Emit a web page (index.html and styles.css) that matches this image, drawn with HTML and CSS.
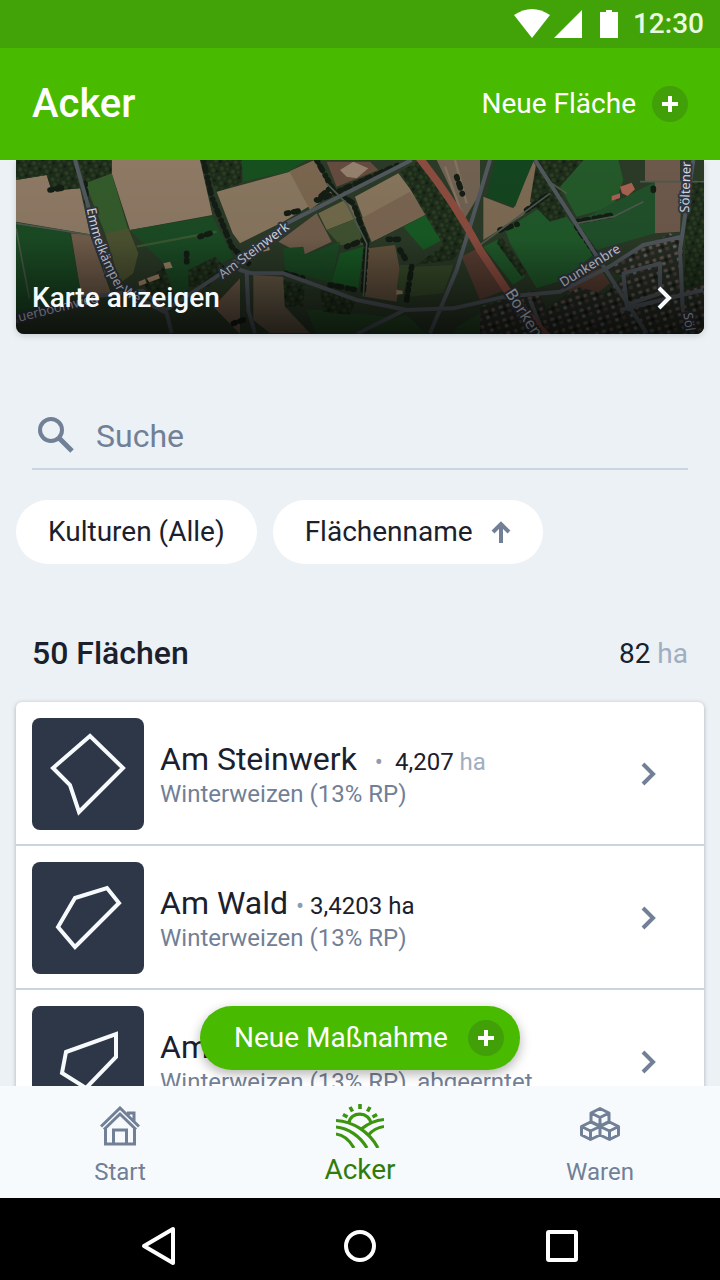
FILE: index.html
```html
<!DOCTYPE html>
<html lang="de">
<head>
<meta charset="utf-8">
<meta name="viewport" content="width=device-width, initial-scale=1">
<title>Acker</title>
<link rel="stylesheet" href="styles.css">
</head>
<body>
<svg class="defs" width="0" height="0" aria-hidden="true">
  <symbol id="chevron" viewBox="0 0 16 24"><path d="M3 2l10 10L3 22" fill="none" stroke="currentColor" stroke-width="4"/></symbol>
  <symbol id="plus" viewBox="0 0 36 36"><circle cx="18" cy="18" r="18" fill="#41a008"/><path d="M18 10v16M10 18h16" stroke="#fff" stroke-width="4"/></symbol>
</svg>
<div class="app">
  <div class="status">
    <svg width="106" height="32" viewBox="0 0 106 32" fill="#fff" aria-hidden="true">
      <path d="M1 7Q19-5 37 7L19 30z"/><path d="M69 2v28H41z"/><path d="M87 4h6V2h6v2h6v26H87z"/>
    </svg>
    <span>12:30</span>
  </div>
  <header class="header">
    <h1>Acker</h1>
    <button class="new-field" type="button">Neue Fläche <svg width="36" height="36" aria-hidden="true"><use href="#plus"/></svg></button>
  </header>
  <main class="content">
    <a class="map" href="#karte">
      <svg class="map-image" viewBox="48 30 2064 522" preserveAspectRatio="xMidYMid slice" aria-hidden="true">
        <defs>
          <linearGradient id="shade" x1="0" y1="0" x2="0" y2="1"><stop offset="0" stop-opacity="0"/><stop offset=".45" stop-opacity=".04"/><stop offset="1" stop-opacity=".68"/></linearGradient>
          <pattern id="wood" width="34" height="30" patternUnits="userSpaceOnUse" patternTransform="rotate(17)"><rect width="34" height="30" fill="#1d2c1a"/><circle cx="7" cy="8" r="6" fill="#2c3e22"/><circle cx="23" cy="5" r="4" fill="#26391f"/><circle cx="17" cy="21" r="6" fill="#293b21"/><circle cx="30" cy="20" r="4" fill="#111b12"/></pattern>
          <pattern id="houses" width="46" height="40" patternUnits="userSpaceOnUse" patternTransform="rotate(-17)"><rect width="46" height="40" fill="#272e25"/><path d="M4 5h12v9H4zM28 6h10v10H28z" fill="#66564e"/><path d="M6 24h10v9H6z" fill="#6d6b65"/><path d="M28 23h11v10H28z" fill="#4e3f39"/><circle cx="21" cy="19" r="6" fill="#151d15"/></pattern>
        </defs>
        <rect x="48" y="30" width="2064" height="522" fill="#2b3a27"/>
        <g fill="#8d7964">
          <path d="M48 90l92-15 15 47 85-7 30 138-222-38zM335 30h265l37 165-247 45-55-170z"/>
          <path d="M650 125l220-60 75-35 50 100-45 25-100 60-130 65-22-30z" fill="#88765f"/>
          <path d="M868 64l77-34 50 100-65 50z" fill="#7a664f"/>
          <path d="M1065 140l130-70 90 120-170 85-22-60z" fill="#86745c"/>
          <path d="M1085 205l145-80 55 65-170 85z" fill="#796551"/>
          <path d="M213 250l57 5 65 180-90 10zM835 275l115-85 45 85-85 40zM640 470l80-85v167z" fill="#715d4b"/>
          <path d="M1105 295l80-10 15 75-10 95-95-15z" fill="#65533f"/>
          <path d="M760 375l90 5 5 90 75 80H810l-50-40z" fill="#685b47"/>
          <path d="M1310 30h130v100l-45 75z" fill="#706151"/><path d="M1335 50l55 155M1365 30l35 130" stroke="#827361" stroke-width="7"/>
          <path d="M1385 320l55-30 75 130-75 30z" fill="#593e32"/>
          <path d="M1450 140l90 35 60-140 40 65-70 95-120 75z" fill="#7d6a53"/>
          <path d="M1935 30h105v65l5 5-5 145-75 5V95h-30z" fill="#6d594b"/>
          <path d="M1690 400l110-45 30 45-90 70z" fill="#593e32"/>
        </g>
        <g fill="#1b4b24">
          <path d="M48 220l162 30 35 190-197 50z"/>
          <path d="M255 100l80-30 50 170-70 10z" fill="#345b2c"/><path d="M315 250l70-15 30 75-15 60-40 30z" fill="#4c5331"/>
          <path d="M390 240l247-42 63 122-100 60-70 70-40-110z"/><path d="M410 290l240-45" stroke="#3b5931" stroke-width="7"/>
          <path d="M725 30h195l-55 35-135 30z" fill="#17501f"/>
          <path d="M955 190l90-45 25 60-90 35z" fill="#70694a"/><path d="M980 240l90-35 20 80-70 0z" fill="#405231"/>
          <path d="M850 295l60-5 5 25 105-40-25 125-140-40z"/><path d="M1020 310l70-20-15 125-80-20z" fill="#185a24"/>
          <path d="M1210 230l75-40 60 70-75 40z" fill="#175a24"/><path d="M1240 350l120-5-30 85-100 10zM1200 345l30 0-20 90-20-20z" fill="#364a29"/>
          <path d="M1485 30h115l-55 140-85-30z" fill="#13451f"/>
          <path d="M1515 240l125-80 60 40 85 110-95 80-80 25-80-135zM1450 290l50-25 75 115-35 25z" fill="#20592a"/>
          <path d="M1750 30h105l15 60-30 80-110 30-50-90z" fill="#24592a"/><path d="M1730 215l235-120v155l-175 50z" fill="#20502a"/>
          <path d="M920 480l50 0 190 20-80 52H950zM1120 520l100-25 60 57H1110zM1370 530l70-40 40 62h-120z" fill="#284b27"/>
        </g>
        <g fill="url(#wood)">
          <path d="M48 30h172l20 85-85 7-15-47-92 15zM235 30h100v40l-80 30zM605 30h120v70l-75 25z"/>
          <path d="M1200 65l60-35 110 170 30 70-40 60-110 15 80-60-45-75zM1610 30h140l-70 80 20 90-50 15-60-60z"/>
          <path d="M2060 90h52v330h-60zM850 390l65 15-5 65-55 0zM565 360l80-40 30 30-50 60-60 0zM960 420l110 25-20 50-80-10z"/>
          <path d="M1500 255l80 110-15 15-75-100zM430 400l60-50 30 80-60 20z"/>
        </g>
        <path d="M980 35h130l25 25-125 50z" fill="#654b3e"/><path d="M1020 60l40-25 45 20-35 30-30-5z" fill="#94806d"/>
        <path d="M1810 350l200-100 38 20 4 282h-370l-60-60 78-60 40-20 70 20 58-50z" fill="url(#houses)"/>
        <path d="M1440 470l170-50 70 132h-240zM2050 420l62-20v152h-62z" fill="url(#houses)"/>
        <g fill="#a18467"><path d="M1860 110l35-12 10 20-22 20-17-8zM1835 138l25-8v14l-25 8z" fill="#a76150"/><path d="M490 340l20-5 8 18-22 4zM440 385l35-13 5 13-32 12zM415 395l20-8 5 13-22 8zM785 290l20-5 5 15-20 5zM1190 420l18 2v10l-20 2z"/></g>
        <g class="hedge">
          <path d="M610 30l25 110 60 150 50 50M950 30l50 90 60 40 40 110-10 150M860 190l50-10M990 115l-40 35M955 150l240-105M1040 290l50-20M1165 268h30M1200 300l15 25M855 370l60 15M990 405l80 15M1235 350l-15 100M1500 240l60-20M1580 180l70-50M1730 215l110-20M1730 230l55 80M1960 115v20M600 260l30-10M560 310v25M150 120l50-8M255 100l5 60M1370 80l20 60M700 520l30-10"/>
        </g>
        <g class="roads">
          <path d="M225 30l40 140 55 200 70 60 110 60 15 60M48 515l110-40 140-38 130-15 65 55M490 485l220-145 150-120L1235 30M700 330l20 30 35 10 95 0 110 40 110 40 150 30 140-5 155-35 165-15 140-70 110-70 115-25M740 370l5 110 20 70M1470 30l-60 200-40 130-80 190M1605 30l180 280 155 240M2080 30l-40 270 8 180 30 70M1070 552l140-70M1590 450l40 100M1860 480l250-60M1870 370l110-30v90l-100 35z"/>
          <path class="path" d="M48 220l222 35M48 235l40 210M1440 285l210-155M980 100l60 60 60 120-10 160M1730 220l110-20 90-45M1920 95h192M1700 130l-60-40"/>
          <path class="main-road" d="M1255 20Q1360 150 1440 300l80 120 130 150"/>
        </g>
        <g class="labels">
          <path id="lane" d="M260 176C280 290 314 350 350 420L440 478" fill="none" stroke="none"/>
          <text><textPath href="#lane">Emmelkämper We</textPath></text>
          <text transform="translate(58 515) rotate(-14)">uerboomweg</text>
          <text transform="translate(668 388) rotate(-37)">Am Steinwerk</text>
          <text transform="translate(1690 412) rotate(-32)">Dunkenbre</text>
          <text transform="translate(2067 188) rotate(-88)">Söltener</text>
          <text class="large" transform="translate(1514 430) rotate(57)">Borken</text>
          <text transform="translate(2050 490) rotate(82)">Söl</text>
        </g>
        <rect x="48" y="30" width="2064" height="522" fill="url(#shade)"/>
      </svg>
      <span class="map-caption">Karte anzeigen <svg class="chevron" aria-hidden="true"><use href="#chevron"/></svg></span>
    </a>
    <label class="search">
      <svg width="36" height="36" viewBox="0 0 36 36" fill="none" stroke="#718096" stroke-width="4" aria-label="Suche"><circle cx="13" cy="13" r="11"/><path d="M21 21l13 13" stroke-width="5"/></svg>
      <input type="search" placeholder="Suche" aria-label="Suche">
    </label>
    <div class="filters">
      <button type="button">Kulturen (Alle)</button>
      <button type="button">Flächenname <svg width="20" height="22" viewBox="0 0 20 22" fill="none" stroke="#718096" stroke-width="4" aria-hidden="true"><path d="M10 22V3M2 11l8-8 8 8"/></svg></button>
    </div>
    <div class="summary"><h2>50 Flächen</h2><p>82 <span>ha</span></p></div>
    <ul class="fields">
      <li><a href="#steinwerk">
        <svg class="shape" viewBox="0 0 112 112" aria-hidden="true"><path d="M58 18L91 50 47 94 38 67 21 50z"/></svg>
        <span class="info"><span class="title">Am Steinwerk <i class="wide">•</i><span class="area">4,207 <span class="unit">ha</span></span></span><span class="crop">Winterweizen (13% RP)</span></span>
        <svg class="chevron" aria-hidden="true"><use href="#chevron"/></svg></a></li>
      <li><a href="#wald">
        <svg class="shape" viewBox="0 0 112 112" aria-hidden="true"><path d="M43 36L75 26 87 41 43 85 26 65z"/></svg>
        <span class="info"><span class="title">Am Wald <i>•</i><span class="area">3,4203 ha</span></span><span class="crop">Winterweizen (13% RP)</span></span>
        <svg class="chevron" aria-hidden="true"><use href="#chevron"/></svg></a></li>
      <li><a href="#am">
        <svg class="shape" viewBox="0 0 112 112" aria-hidden="true"><path d="M34 46L84 28V51L54 82 30 67z"/></svg>
        <span class="info"><span class="title">Am</span><span class="crop">Winterweizen (13% RP), abgeerntet</span></span>
        <svg class="chevron" aria-hidden="true"><use href="#chevron"/></svg></a></li>
    </ul>
  </main>
  <div class="bottom">
    <button class="fab" type="button">Neue Maßnahme <svg width="36" height="36" aria-hidden="true"><use href="#plus"/></svg></button>
    <nav class="tabs">
      <a href="#start"><svg width="40" height="40" viewBox="0 0 40 40" fill="none" stroke="currentColor" stroke-width="3" aria-hidden="true"><path d="M1 20.500L20 2l19 18.500M5.500 22v16h29V22M4 23.500L20 8l16 15.500M13.500 38V24h13v14M28.500 9V7H34v8" /></svg><span>Start</span></a>
      <a class="active" href="#acker"><svg width="48" height="44" viewBox="0 0 48 44" fill="none" stroke="currentColor" stroke-width="3.200" aria-hidden="true"><path d="M24 0v5M14 3l2.500 4.500M34 3l-2.500 4.500M7 10.500l4.500 2.500M41 10.500l-4.500 2.500" stroke-width="3.600"/><path d="M13 19c1-12 21-12 22 1M0 16.500c17 1 33 11 42 27.500M0 23c12 1 24 9 31 21M0 30c8 1 14 7 18 14M48 15.500c-9 1-17 5-22 9M48 22.500c-7 1-12 4-16 9"/></svg><span>Acker</span></a>
      <a href="#waren"><svg width="40" height="36" viewBox="0 0 40 36" fill="none" stroke="currentColor" stroke-width="3" stroke-linejoin="round" aria-hidden="true"><path d="M20 2.500l9 4.500v8.500L20 20l-9-4.500V7zM11 7l9 4.500L29 7M20 11.500V20M10.500 16l9.500 4.500V29l-9.500 4.500L1.500 29v-8.500zM1.500 20.500l9 4.500L20 20.500M10.500 25v8.500M29.500 16l9 4.500V29l-9 4.500L20 29v-8.500zM20 20.500l9.500 4.500 9-4.500M29.500 25v8.500"/></svg><span>Waren</span></a>
    </nav>
  </div>
  <div class="system">
    <button type="button" aria-label="Zurück"><svg width="36" height="40" viewBox="0 0 36 40"><path d="M33 3v34L4 20z"/></svg></button>
    <button type="button" aria-label="Startbildschirm"><svg width="32" height="32" viewBox="0 0 32 32"><circle cx="16" cy="16" r="14"/></svg></button>
    <button type="button" aria-label="Übersicht"><svg width="32" height="32" viewBox="0 0 32 32"><rect x="2" y="2" width="28" height="28" rx="1"/></svg></button>
  </div>
</div>
</body>
</html>
```

FILE: styles.css
```css
* { box-sizing: border-box; }
body { margin: 0; font-family: Roboto, "Liberation Sans", sans-serif; font-size: 28px; line-height: 36px; color: #1a202c; background: #ebf1f5; }
h1, h2, p, ul { margin: 0; padding: 0; }
a { color: inherit; text-decoration: none; }
button, input { font: inherit; color: inherit; border: 0; background: none; padding: 0; }
svg { display: block; flex: none; }
.defs { position: absolute; }
.app { display: flex; flex-direction: column; height: 100vh; }
.status { display: flex; align-items: center; justify-content: flex-end; gap: 14px; height: 48px; padding: 0 16px; background: #41a307; color: #eaf8df; font-weight: 500; }
.header { display: flex; align-items: center; justify-content: space-between; height: 112px; padding: 0 32px; background: #48bb00; color: #fff; }
.header h1 { font-size: 40px; line-height: 48px; font-weight: 500; }
.new-field { display: flex; align-items: center; gap: 16px; }
.content { flex: 1; min-height: 0; overflow-y: auto; scrollbar-width: none; padding: 0 16px; }
.map { display: flex; align-items: flex-end; position: relative; height: 174px; border-radius: 0 0 8px 8px; overflow: hidden; color: #f7fafc; box-shadow: 0 2px 6px rgba(0, 0, 0, .15); }
.map-image { position: absolute; inset: 0; width: 100%; height: 100%; }
.hedge { fill: none; stroke: #131d14; stroke-width: 17; stroke-linecap: round; stroke-linejoin: round; stroke-dasharray: 6 15 14 18 1 14; }
.roads { fill: none; stroke: #50575d; stroke-width: 12; stroke-linejoin: round; }
.path { stroke: #4d594c; stroke-width: 5; }
.main-road { stroke: #8b4c3f; stroke-width: 23; }
.labels { font-family: "Noto Sans", sans-serif; font-size: 39px; fill: #d5d9df; stroke: #303641; stroke-width: 12; paint-order: stroke; stroke-linejoin: round; }
.large { font-size: 48px; }
.map-caption { position: relative; flex: 1; display: flex; align-items: center; justify-content: space-between; padding: 0 32px 18px 16px; font-weight: 500; }
.chevron { width: 16px; height: 24px; }
.search { display: flex; align-items: center; gap: 22px; height: 68px; margin: 68px 16px 30px; padding-left: 6px; border-bottom: 2px solid #cbd5e0; }
.search input { flex: 1; min-width: 0; height: 48px; padding-top: 2px; font-size: 32px; outline: 0; }
.search input::placeholder { color: #718096; opacity: 1; }
.filters { display: flex; gap: 16px; }
.filters button { display: flex; align-items: center; gap: 18px; height: 64px; padding: 0 32px; border-radius: 32px; background: #fff; }
.summary { display: flex; align-items: center; justify-content: space-between; margin: 70px 16px 28px; line-height: 40px; }
.summary h2 { font-size: 32px; line-height: 38px; padding-bottom: 2px; font-weight: 500; }
.summary span, .unit { color: #a0aec0; }
.fields { list-style: none; background: #fff; border-radius: 6px; box-shadow: 0 1px 4px rgba(45, 55, 72, .35); }
.fields li + li { border-top: 2px solid #cbd5e0; }
.fields a { display: flex; align-items: center; gap: 16px; padding: 16px 48px 14px 16px; color: #718096; }
.shape { width: 112px; height: 112px; border-radius: 8px; background: #2d3748; fill: none; stroke: #f7fafc; stroke-width: 4; }
.info { flex: 1; display: flex; flex-direction: column; min-width: 0; }
.title { display: flex; align-items: baseline; color: #1a202c; font-size: 32px; line-height: 38px; padding-bottom: 2px; }
.title i { margin: 0 6px 0 8px; color: #8f9caf; font-size: 24px; line-height: 24px; font-style: normal; }
.title .wide { margin: 0 12px 0 18px; }
.area { font-size: 24px; line-height: 24px; }
.crop { font-size: 24px; line-height: 28px; }
.bottom { position: relative; }
.fab { position: absolute; left: 50%; bottom: 100%; transform: translateX(-50%); display: flex; align-items: center; justify-content: space-between; gap: 16px; width: 320px; height: 64px; margin-bottom: 16px; padding: 0 16px 0 34px; border-radius: 32px; color: #fff; background: #48bb00; box-shadow: 0 4px 12px rgba(0, 0, 0, .3); white-space: nowrap; }
.tabs { display: grid; grid-template-columns: repeat(3, 1fr); height: 112px; background: #f7fafc; color: #718096; font-size: 24px; }
.tabs a { display: flex; flex-direction: column; align-items: center; justify-content: space-between; padding: 20px 0 8px; }
.tabs .active { padding: 18px 0 10px; color: #2f7d08; font-size: 28px; }
.active svg { color: #3b950e; }
.system { display: grid; grid-template-columns: repeat(3, 202px); justify-content: center; height: 82px; padding-top: 14px; background: #000; }
.system button { display: grid; place-items: center; }
.system svg { fill: none; stroke: #fff; stroke-width: 4; stroke-linejoin: round; }
```
